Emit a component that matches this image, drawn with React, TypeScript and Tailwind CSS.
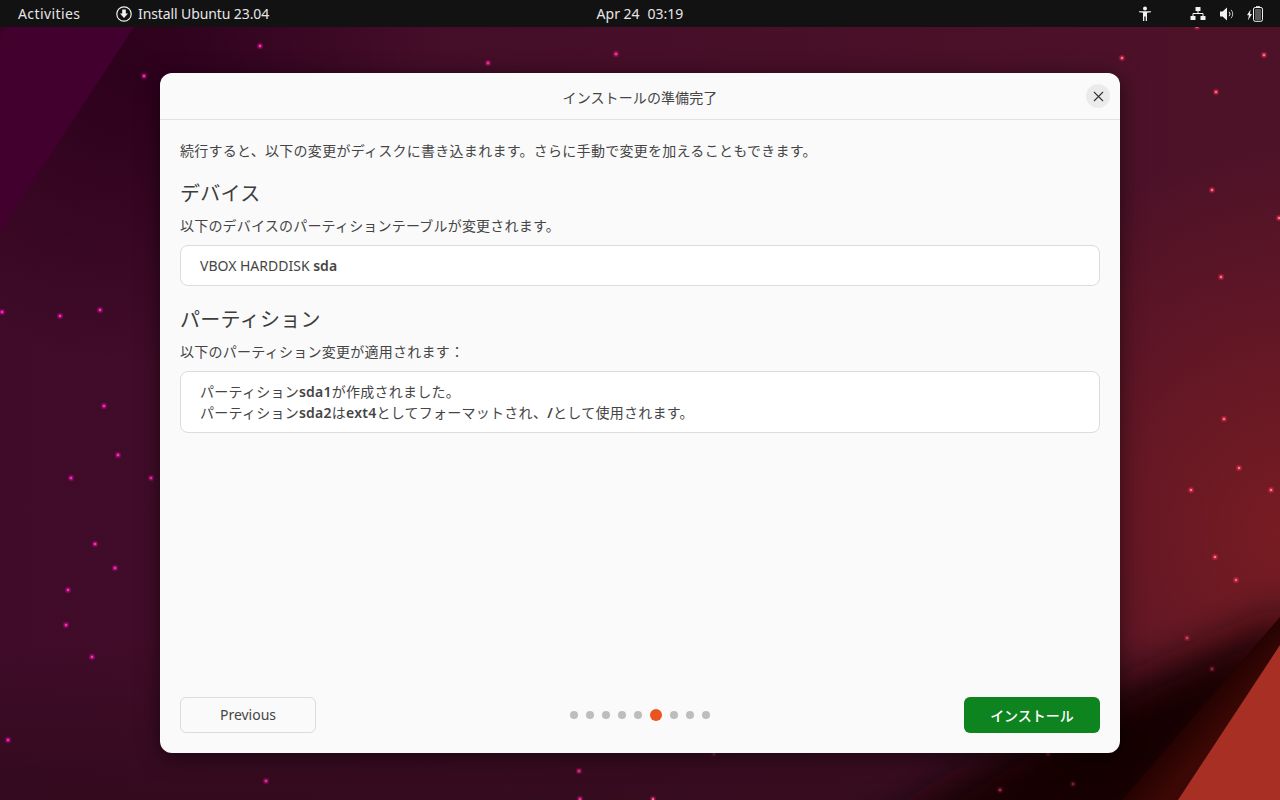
import { X } from "lucide-react"

/** Stars on the wallpaper: x, y and how bright they are */
const STARS: [number, number, number][] = [
  [260, 46, 1], [144, 76, 1], [488, 63, 1], [616, 54, 1], [1122, 58, 1], [1264, 55, 1], [1216, 92, 1], [1197, 27, 0.8],
  [1212, 190, 1], [1279, 218, 1], [1221, 277, 1], [1224, 419, 1], [1239, 468, 1], [1191, 490, 1], [1271, 490, 1],
  [1215, 557, 1], [1236, 580, 0.9], [1187, 638, 0.6], [1212, 669, 0.4], [2, 312, 1], [60, 316, 1], [100, 310, 1],
  [104, 406, 1], [118, 455, 1], [71, 478, 1], [151, 478, 1], [95, 544, 1], [115, 568, 1], [68, 590, 1], [66, 625, 1],
  [92, 657, 1], [8, 740, 1], [266, 781, 0.9], [579, 771, 0.9], [580, 799, 0.9], [653, 799, 0.9], [1000, 790, 0.5],
  [1073, 784, 0.4], [1048, 754, 0.3], [714, 754, 0.3],
]

/**
 * Wallpaper drawing behind the desktop
 */
function Wallpaper() {
  return (
    <svg className="absolute inset-0" width="1280" height="800" viewBox="0 0 1280 800">
      <defs>
        <linearGradient id="base" gradientUnits="userSpaceOnUse" x1="0" y1="0" x2="1280" y2="0">
          <stop offset="0" stopColor="#3f0b29" />
          <stop offset="1" stopColor="#4e1228" />
        </linearGradient>
        <radialGradient id="corner" gradientUnits="userSpaceOnUse" cx="130" cy="70" r="300">
          <stop offset="0" stopColor="#2d001c" />
          <stop offset="1" stopColor="#2d001c" stopOpacity="0" />
        </radialGradient>
        <radialGradient id="red" gradientUnits="userSpaceOnUse" cx="1290" cy="530" r="380">
          <stop offset="0" stopColor="#781c22" />
          <stop offset="1" stopColor="#781c22" stopOpacity="0" />
        </radialGradient>
        <linearGradient id="bottom" gradientUnits="userSpaceOnUse" x1="0" y1="640" x2="0" y2="800">
          <stop offset="0" stopColor="#2e0a1a" stopOpacity="0" />
          <stop offset="1" stopColor="#2e0a1a" stopOpacity="0.7" />
        </linearGradient>
        <linearGradient id="band" gradientUnits="userSpaceOnUse" x1="1180" y1="710" x2="1215" y2="740">
          <stop offset="0" stopColor="#1a0000" />
          <stop offset="1" stopColor="#3c0805" />
        </linearGradient>
        <filter id="soft" x="-30%" y="-30%" width="160%" height="160%">
          <feGaussianBlur stdDeviation="22" />
        </filter>
      </defs>
      <rect width="1280" height="800" fill="url(#base)" />
      <rect width="1280" height="800" fill="url(#corner)" />
      <rect width="1280" height="800" fill="url(#red)" />
      <rect width="1280" height="800" fill="url(#bottom)" />
      <polygon points="0,40 4,27 134,27 0,232" fill="#42002f" />
      <polygon points="1295,612 1120,690 860,840 1130,840 1295,650" fill="#130000" filter="url(#soft)" />
      <polygon points="1122,800 1280,617 1280,645 1178,800" fill="url(#band)" />
      <polygon points="1178,800 1280,645 1280,800" fill="#a82f24" />
      {STARS.map(([x, y, level]) => {
        const t = x / 1280
        const color = `rgb(${225 + 30 * t},${10 + 40 * t},${170 - 90 * t})`
        return (
          <g key={`${x}-${y}`} opacity={level}>
            <circle cx={x} cy={y} r="3.2" fill={color} opacity="0.28" />
            <circle cx={x} cy={y} r="2" fill={color} opacity="0.6" />
            <circle cx={x} cy={y} r="1.1" fill={t > 0.5 ? "#ff8aa0" : "#ff40c0"} />
          </g>
        )
      })}
    </svg>
  )
}

/** Circled arrow of the installer in the top bar */
function InstallerIcon() {
  return (
    <svg width="16" height="16" viewBox="0 0 16 16" fill="none">
      <circle cx="8" cy="8" r="7.2" stroke="#f2f2f2" strokeWidth="1.2" />
      <path d="M6.2 3.5h3.6v4h2.2L8 12 4 7.5h2.2z" fill="#f2f2f2" />
    </svg>
  )
}

function AccessibilityIcon() {
  return (
    <svg width="14" height="16" viewBox="0 0 14 16" fill="#f2f2f2">
      <circle cx="7" cy="2.6" r="2" />
      <path d="M1 5.2h12v1.1L9 6.7V15H7.7v-4.5H6.3V15H5V6.7L1 6.3z" />
    </svg>
  )
}

function NetworkIcon() {
  return (
    <svg width="16" height="16" viewBox="0 0 16 16" fill="none">
      <rect x="5.5" y="1" width="5" height="4" rx="0.5" fill="#f2f2f2" />
      <rect x="0.5" y="10" width="5" height="4" rx="0.5" fill="#f2f2f2" />
      <rect x="10.5" y="10" width="5" height="4" rx="0.5" fill="#f2f2f2" />
      <path d="M8 5v2.5M3 10V7.5h10V10" stroke="#f2f2f2" strokeWidth="1" />
    </svg>
  )
}

function VolumeIcon() {
  return (
    <svg width="16" height="16" viewBox="0 0 16 16" fill="none">
      <path d="M1 5.5h2.6L8 1.5v13l-4.4-4H1z" fill="#f2f2f2" />
      <path d="M10 5.8a3 3 0 0 1 0 4.4" stroke="#f2f2f2" strokeWidth="1" />
      <path d="M12 3.8a6 6 0 0 1 0 8.4" stroke="#bdbdbd" strokeWidth="1" />
    </svg>
  )
}

function BatteryIcon() {
  return (
    <svg width="18" height="16" viewBox="0 0 18 16" fill="none">
      <path d="M4.6 3.5 1 9.2h2L1.8 14.4 6 8H4z" fill="#f2f2f2" />
      <rect x="7.5" y="1.5" width="9" height="13.8" rx="1.6" stroke="#f2f2f2" strokeWidth="1" />
      <rect x="10" y="0.2" width="4" height="1.3" fill="#f2f2f2" />
      <rect x="9" y="3" width="6" height="11" rx="0.6" fill="#5a5a5a" />
    </svg>
  )
}

/** Title bar at the top of the desktop */
function TopBar() {
  return (
    <header className="grid h-[27px] grid-cols-[1fr_auto_1fr] items-center bg-[#121212] text-[14px] text-[#e6e6e6]">
      <div className="flex items-center">
        <span className="ml-[18px] w-[98px] tracking-[0.4px]">Activities</span>
        <InstallerIcon />
        <span className="ml-[6px] tracking-[-0.1px]">Install Ubuntu 23.04</span>
      </div>
      <div className="flex gap-[8px]">
        <span>Apr 24</span>
        <span>03:19</span>
      </div>
      <div className="flex items-center justify-end pr-[16px]">
        <AccessibilityIcon />
        <span className="ml-[38px] flex">
          <NetworkIcon />
        </span>
        <span className="ml-[13px] flex">
          <VolumeIcon />
        </span>
        <span className="ml-[11px] flex">
          <BatteryIcon />
        </span>
      </div>
    </header>
  )
}

/** White rounded box that holds the summary lines */
function SummaryBox({ children }: { children: React.ReactNode }) {
  return (
    <div className="mt-[9px] rounded-[8px] border border-[#dcdcdc] bg-white px-[19px] py-[9px] text-[14px] leading-[21px] text-[#454545]">
      {children}
    </div>
  )
}

/** Pager dots: the sixth step is the current one */
function StepDots() {
  return (
    <div className="flex items-center gap-2">
      {[0, 1, 2, 3, 4].map((i) => (
        <span key={i} className="h-2 w-2 rounded-full bg-[#bdbdbd]" />
      ))}
      <span className="h-3 w-3 rounded-full bg-[#e95420]" />
      {[6, 7, 8].map((i) => (
        <span key={i} className="h-2 w-2 rounded-full bg-[#bdbdbd]" />
      ))}
    </div>
  )
}

export default function App() {
  return (
    <div className="relative h-[800px] w-[1280px] overflow-hidden font-['Noto_Sans','Noto_Sans_CJK_JP',sans-serif]">
      <Wallpaper />
      <div className="relative flex h-full flex-col">
        <TopBar />
        <main className="flex justify-center pt-[46px]">
          <div className="flex h-[680px] w-[960px] flex-col rounded-[12px] bg-[#fafafa] shadow-[0_4px_22px_rgba(0,0,0,0.55)]">
            <div className="flex h-[47px] items-center justify-between border-b border-[#e2e2e2] pl-[34px] pr-[10px]">
              <span className="flex-1 pt-[2px] text-center text-[14px] tracking-[0.1px] text-[#454545]">インストールの準備完了</span>
              <button className="flex h-6 w-6 items-center justify-center rounded-full bg-[#ebebeb] text-[#333]" aria-label="Close">
                <X size={17} strokeWidth={1.5} />
              </button>
            </div>

            <div className="flex flex-1 flex-col px-[20px]">
              <p className="mt-[20px] text-[14px] leading-[21px] tracking-[0.27px] text-[#454545]">
                続行すると、以下の変更がディスクに書き込まれます。さらに手動で変更を加えることもできます。
              </p>
              <h2 className="mt-[19px] text-[20px] font-normal leading-[28px] tracking-[0.3px] text-[#3d3d3d]">デバイス</h2>
              <p className="mt-[7px] text-[14px] leading-[21px] tracking-[0.2px] text-[#454545]">以下のデバイスのパーティションテーブルが変更されます。</p>
              <SummaryBox>
                VBOX HARDDISK <b className="font-semibold">sda</b>
              </SummaryBox>
              <h2 className="mt-[20px] text-[20px] font-normal leading-[28px] tracking-[0.3px] text-[#3d3d3d]">パーティション</h2>
              <p className="mt-[7px] text-[14px] leading-[21px] tracking-[0.25px] text-[#454545]">以下のパーティション変更が適用されます：</p>
              <SummaryBox>
                <div className="tracking-[0.25px]">
                  パーティション<b className="font-semibold">sda1</b>が作成されました。
                </div>
                <div className="tracking-[0.25px]">
                  パーティション<b className="font-semibold">sda2</b>は<b className="font-semibold">ext4</b>としてフォーマットされ、<b className="font-semibold">/</b>として使用されます。
                </div>
              </SummaryBox>

              <div className="mb-[20px] mt-auto flex items-center justify-between">
                <button className="h-[36px] w-[136px] rounded-[6px] border border-[#dcdcdc] bg-[#fafafa] pb-[1px] text-[14px] text-[#454545]">Previous</button>
                <StepDots />
                <button className="h-[36px] w-[136px] rounded-[6px] bg-[#0e8420] text-[14px] font-medium text-white">インストール</button>
              </div>
            </div>
          </div>
        </main>
      </div>
    </div>
  )
}
